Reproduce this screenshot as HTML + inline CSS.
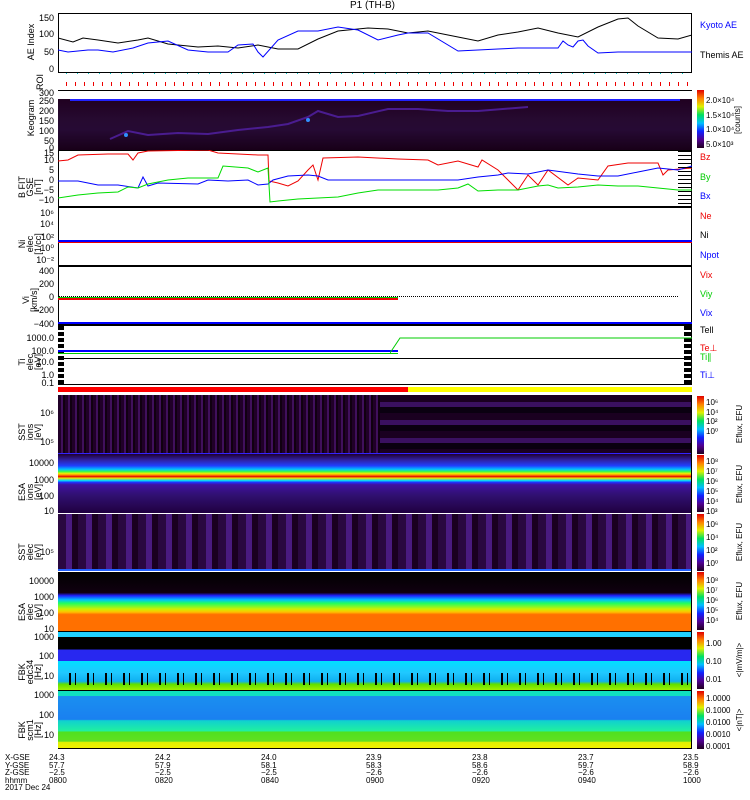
<!DOCTYPE html>
<html><head><meta charset="utf-8"><style>
body{margin:0;background:#fff;width:750px;height:800px;position:relative;overflow:hidden;font-family:"Liberation Sans",sans-serif;}
.a{position:absolute}
.p{position:absolute;left:58px;width:634px;border:1px solid #000;box-sizing:border-box}
.t{position:absolute;font-size:9px;line-height:9px;white-space:nowrap}
.yl{position:absolute;font-size:9px;transform:rotate(-90deg);transform-origin:center;white-space:nowrap;text-align:center;line-height:8px}
.cb{position:absolute;left:697px;width:7px;background:linear-gradient(to top,#200020,#500090,#1020ff,#00c0ff,#00e060,#e0f000,#ff8000,#e00000)}
.r{position:absolute;font-size:9px;left:700px;white-space:nowrap}
.tk{position:absolute;font-size:9px;text-align:right;width:54px;left:0}
.rt{position:absolute;left:678px;width:14px;background:repeating-linear-gradient(#000 0 1px,transparent 1px 4px)}
</style></head><body>
<div class="t" style="left:350px;top:1px;font-size:10px">P1 (TH-B)</div>

<!-- AE -->
<div class="p" style="top:13px;height:60px"></div>
<svg class="a" style="left:58px;top:13px" width="634" height="60">
<polyline fill="none" stroke="#000" points="0,25 15,29 25,25 40,27 60,30 80,27 90,25 110,31 140,34 160,33 180,35 200,32 220,36 240,36 260,26 280,18 310,15 330,16 350,20 370,18 400,24 420,28 440,22 460,19 480,15 500,20 520,24 540,14 560,6 570,5 580,13 600,25 620,26 634,22"/>
<polyline fill="none" stroke="#00f" points="0,37 10,39 30,37 40,37 55,39 75,35 90,30 110,28 130,37 150,39 170,39 180,32 195,31 200,39 205,44 220,27 240,18 260,18 280,14 300,17 320,27 340,22 350,20 370,20 400,38 420,37 440,36 460,35 490,35 500,35 505,28 510,32 515,34 520,28 525,27 530,33 540,40 560,39 590,39 634,39"/>
</svg>
<div class="tk" style="top:13px">150</div><div class="tk" style="top:29px">100</div><div class="tk" style="top:47px">50</div><div class="tk" style="top:64px">0</div>
<div class="yl" style="left:6px;top:38px;width:50px">AE Index</div>
<div class="r" style="top:20px;color:#00f">Kyoto AE</div><div class="r" style="top:50px">Themis AE</div>

<!-- ROI -->
<div class="a" style="left:58px;top:73px;width:634px;height:17px;border-bottom:1px solid #000;background:repeating-linear-gradient(90deg,transparent 0 8px,#0cc 8px 9px,transparent 9px 11px) 0 0/100% 1px no-repeat,repeating-linear-gradient(90deg,transparent 0 8px,#e00 8px 9px) 0 9px/100% 4px no-repeat"></div>
<div class="yl" style="left:30px;top:78px;width:20px">ROI</div>

<!-- Keogram -->
<div class="p" style="top:90px;height:60px;border:none;border-top:1px solid #000"></div>
<div class="a" style="left:58px;top:99px;width:634px;height:51px;background:linear-gradient(#200020,#260a30 40%,#260a34 60%,#180018)"></div>
<div class="a" style="left:70px;top:99px;width:610px;height:2px;background:#22f"></div>
<svg class="a" style="left:58px;top:99px" width="634" height="51"><polyline fill="none" stroke="#4a1c90" stroke-width="2" points="52,40 70,32 90,36 120,34 150,35 180,31 210,28 230,25 250,18 260,12 280,18 300,17 330,10 360,10 390,12 420,12 470,8"/><circle cx="68" cy="36" r="2" fill="#3090ff"/><circle cx="250" cy="21" r="2" fill="#3090ff"/></svg>
<div class="tk" style="top:88px">300</div><div class="tk" style="top:96px">250</div><div class="tk" style="top:106px">200</div><div class="tk" style="top:116px">150</div><div class="tk" style="top:126px">100</div><div class="tk" style="top:136px">50</div><div class="tk" style="top:143px">0</div>
<div class="yl" style="left:6px;top:114px;width:50px">Keogram</div>
<div class="cb" style="top:90px;height:58px;left:697px"></div>
<div class="r" style="left:706px;top:96px;font-size:8px">2.0×10⁴</div><div class="r" style="left:706px;top:111px;font-size:8px">1.5×10⁴</div><div class="r" style="left:706px;top:125px;font-size:8px">1.0×10⁴</div><div class="r" style="left:706px;top:140px;font-size:8px">5.0×10³</div>
<div class="yl" style="left:718px;top:116px;width:40px;font-size:8px">[counts]</div>

<!-- B FIT -->
<div class="p" style="top:150px;height:57px"></div>
<svg class="a" style="left:58px;top:150px" width="634" height="57">
<polyline fill="none" stroke="#e00" points="0,11 10,10 20,5 50,4 70,4 75,10 80,3 90,1 150,0 160,3 180,4 200,5 210,5 211,31 220,33 230,36 240,31 250,20 255,15 260,30 265,8 300,7 340,9 370,10 380,15 400,11 420,17 424,10 440,20 450,30 460,40 470,25 480,35 490,20 510,35 520,28 540,30 550,16 570,13 600,13 605,25 610,20 634,18"/>
<polyline fill="none" stroke="#00f" points="0,31 20,31 30,33 40,35 60,35 80,38 85,27 90,36 100,33 140,34 150,30 170,31 190,30 200,35 210,34 215,30 230,26 250,25 260,26 270,30 300,30 340,30 380,30 400,30 420,27 440,25 450,23 470,24 490,20 520,24 540,26 560,26 580,22 600,18 620,20 634,16"/>
<polyline fill="none" stroke="#0d0" points="0,48 20,45 40,43 60,42 70,37 80,38 90,34 110,30 130,28 160,28 165,16 190,18 200,22 210,18 212,52 220,51 240,49 260,48 280,47 300,43 320,40 340,40 380,40 400,38 410,34 420,41 440,40 460,40 480,36 490,35 500,38 520,37 540,35 560,36 580,36 620,40 634,40"/>
</svg>
<div class="rt" style="top:151px;height:55px"></div>
<div class="tk" style="top:148px">15</div><div class="tk" style="top:155px">10</div><div class="tk" style="top:165px">5</div><div class="tk" style="top:175px">0</div><div class="tk" style="top:185px">−5</div><div class="tk" style="top:195px">−10</div>
<div class="yl" style="left:10px;top:175px;width:40px">B FIT<br>GSE<br>[nT]</div>
<div class="r" style="top:152px;color:#e00">Bz</div><div class="r" style="top:172px;color:#0c0">By</div><div class="r" style="top:191px;color:#00f">Bx</div>

<!-- Ni -->
<div class="p" style="top:207px;height:59px"></div>
<div class="a" style="left:58px;top:240px;width:634px;height:2px;background:#00f"></div>
<div class="a" style="left:58px;top:242px;width:634px;height:1px;background:#e00"></div>
<div class="tk" style="top:208px">10⁶</div><div class="tk" style="top:219px">10⁴</div><div class="tk" style="top:232px">10²</div><div class="tk" style="top:243px">10⁰</div><div class="tk" style="top:255px">10⁻²</div>
<div class="yl" style="left:10px;top:232px;width:40px">Ni<br>elec<br>[1/cc]</div>
<div class="r" style="top:211px;color:#e00">Ne</div><div class="r" style="top:230px">Ni</div><div class="r" style="top:250px;color:#00f">Npot</div>

<!-- Vi -->
<div class="p" style="top:266px;height:59px"></div>
<div class="a" style="left:58px;top:296px;width:620px;border-top:1px dotted #000"></div>
<div class="a" style="left:58px;top:297px;width:340px;height:1px;background:#0c0"></div>
<div class="a" style="left:58px;top:298px;width:340px;height:2px;background:#e00"></div>
<div class="a" style="left:58px;top:322px;width:634px;height:2px;background:#00f"></div>
<div class="tk" style="top:266px">400</div><div class="tk" style="top:279px">200</div><div class="tk" style="top:292px">0</div><div class="tk" style="top:305px">−200</div><div class="tk" style="top:319px">−400</div>
<div class="yl" style="left:10px;top:292px;width:40px">Vi<br>[km/s]</div>
<div class="r" style="top:270px;color:#e00">Vix</div><div class="r" style="top:289px;color:#0c0">Viy</div><div class="r" style="top:308px;color:#00f">Vix</div>

<!-- Ti -->
<div class="p" style="top:325px;height:34px"></div>
<div class="p" style="top:358px;height:27px"></div>
<div class="a" style="left:58px;top:326px;width:6px;height:58px;background:repeating-linear-gradient(#000 0 4px,#fff 4px 6px)"></div>
<div class="a" style="left:684px;top:326px;width:7px;height:58px;background:repeating-linear-gradient(#000 0 4px,#fff 4px 6px)"></div>
<div class="a" style="left:58px;top:350px;width:340px;height:2px;background:#00f"></div>
<div class="a" style="left:58px;top:353px;width:340px;height:1px;background:#0c0"></div>
<svg class="a" style="left:390px;top:335px" width="302" height="20"><polyline fill="none" stroke="#0c0" points="0,18 10,3 302,3"/></svg>
<div class="tk" style="top:333px">1000.0</div><div class="tk" style="top:346px">100.0</div><div class="tk" style="top:357px">10.0</div><div class="tk" style="top:370px">1.0</div><div class="tk" style="top:378px">0.1</div>
<div class="yl" style="left:10px;top:350px;width:40px">Ti<br>elec<br>[eV]</div>
<div class="r" style="top:325px">Tell</div><div class="r" style="top:343px;color:#e00">Te⊥</div><div class="r" style="top:352px;color:#0c0">Ti∥</div><div class="r" style="top:370px;color:#00f">Ti⊥</div>

<!-- bar -->
<div class="a" style="left:58px;top:387px;width:350px;height:5px;background:#f00"></div>
<div class="a" style="left:408px;top:387px;width:284px;height:5px;background:#ff0"></div>

<!-- SST ion -->
<div class="a" style="left:58px;top:395px;width:634px;height:58px;background:repeating-linear-gradient(90deg,#200028 0 3px,#40105c 3px 5px,#100010 5px 7px);"></div>
<div class="a" style="left:380px;top:395px;width:312px;height:58px;background:repeating-linear-gradient(#1a0020 0 7px,#3a1060 7px 12px,#0a0010 12px 18px)"></div>
<div class="a" style="left:58px;top:453px;width:634px;height:1px;background:#32f"></div>
<div class="tk" style="top:408px">10⁶</div><div class="tk" style="top:437px">10⁵</div>
<div class="yl" style="left:10px;top:420px;width:40px">SST<br>ions<br>[eV]</div>

<!-- ESA ion -->
<div class="a" style="left:58px;top:454px;width:634px;height:59px;background:linear-gradient(#200030 0,#3020a0 10%,#2040ff 20%,#00c0ff 26%,#40ff40 30%,#f0f000 33%,#ff8000 36%,#e00000 38%,#f0e000 41%,#00e0ff 45%,#2030ff 48%,#4010a0 52%,#301070 70%,#200040 100%)"></div>
<div class="tk" style="top:458px">10000</div><div class="tk" style="top:475px">1000</div><div class="tk" style="top:491px">100</div><div class="tk" style="top:506px">10</div>
<div class="yl" style="left:10px;top:480px;width:40px">ESA<br>ions<br>[eV]</div>

<!-- SST elec -->
<div class="a" style="left:58px;top:514px;width:634px;height:57px;background:repeating-linear-gradient(90deg,#2a0840 0 8px,#4a1a80 8px 14px,#1a0020 14px 20px)"></div>
<div class="a" style="left:58px;top:569px;width:634px;height:2px;background:#2060ff"></div>
<div class="tk" style="top:547px">10⁵</div>
<div class="yl" style="left:10px;top:540px;width:40px">SST<br>elec<br>[eV]</div>

<!-- ESA elec -->
<div class="a" style="left:58px;top:572px;width:634px;height:59px;background:linear-gradient(#000 0,#100010 35%,#2020ff 40%,#00c0ff 47%,#20ff60 53%,#d0f000 63%,#ffc000 68%,#ff7000 72%,#ff7000 100%)"></div>
<div class="tk" style="top:576px">10000</div><div class="tk" style="top:592px">1000</div><div class="tk" style="top:608px">100</div><div class="tk" style="top:624px">10</div>
<div class="yl" style="left:10px;top:600px;width:40px">ESA<br>elec<br>[eV]</div>

<!-- FBK edc34 -->
<div class="a" style="left:58px;top:631px;width:634px;height:59px;border-top:1px solid #000;box-sizing:border-box;background:linear-gradient(#20d0ff 0,#20d0ff 9%,#000 9%,#000 30%,#2828f0 30%,#2828f0 50%,#00e0ff 50%,#20c8ff 70%,#10b0f0 85%,#60e000 90%,#a0f000 100%)"></div>
<div class="a" style="left:58px;top:673px;width:634px;height:12px;background:repeating-linear-gradient(90deg,transparent 0 11px,#000 11px 13px,transparent 13px 17px,#000 17px 18px)"></div>
<div class="tk" style="top:632px">1000</div><div class="tk" style="top:651px">100</div><div class="tk" style="top:671px">10</div>
<div class="yl" style="left:10px;top:660px;width:40px">FBK<br>edc34<br>[Hz]</div>

<!-- FBK scm1 -->
<div class="a" style="left:58px;top:690px;width:634px;height:59px;border-top:1px solid #000;border-bottom:1px solid #000;box-sizing:border-box;background:linear-gradient(#10e0c0 0,#10e0c0 9%,#1a8ff0 9%,#1a80f0 50%,#10d0d0 52%,#20f0a0 70%,#50e020 72%,#60e020 88%,#e0f000 90%,#f0f000 100%)"></div>
<div class="tk" style="top:690px">1000</div><div class="tk" style="top:710px">100</div><div class="tk" style="top:730px">10</div>
<div class="yl" style="left:10px;top:718px;width:40px">FBK<br>scm1<br>[Hz]</div>

<!-- right border/colorbars -->
<div class="a" style="left:691px;top:395px;width:1px;height:354px;background:#000"></div>
<div class="cb" style="top:396px;height:58px"></div>
<div class="cb" style="top:455px;height:57px"></div>
<div class="cb" style="top:514px;height:57px"></div>
<div class="cb" style="top:572px;height:58px"></div>
<div class="cb" style="top:632px;height:57px"></div>
<div class="cb" style="top:691px;height:58px"></div>
<div class="r" style="left:706px;top:398px;font-size:8px;line-height:9.5px">10⁶<br>10⁴<br>10²<br>10⁰</div>
<div class="r" style="left:706px;top:457px;font-size:8px;line-height:10px">10⁸<br>10⁷<br>10⁶<br>10⁵<br>10⁴<br>10³</div>
<div class="r" style="left:706px;top:518px;font-size:8px;line-height:13px">10⁶<br>10⁴<br>10²<br>10⁰</div>
<div class="r" style="left:706px;top:576px;font-size:8px;line-height:10px">10⁸<br>10⁷<br>10⁶<br>10⁵<br>10⁴</div>
<div class="r" style="left:706px;top:635px;font-size:8px;line-height:18px">1.00<br>0.10<br>0.01</div>
<div class="r" style="left:706px;top:693px;font-size:8px;line-height:12px">1.0000<br>0.1000<br>0.0100<br>0.0010<br>0.0001</div>
<div class="yl" style="left:715px;top:420px;width:50px;font-size:8px">Eflux, EFU</div>
<div class="yl" style="left:715px;top:480px;width:50px;font-size:8px">Eflux, EFU</div>
<div class="yl" style="left:715px;top:538px;width:50px;font-size:8px">Eflux, EFU</div>
<div class="yl" style="left:715px;top:597px;width:50px;font-size:8px">Eflux, EFU</div>
<div class="yl" style="left:715px;top:656px;width:50px;font-size:8px">&lt;|mV/m|&gt;</div>
<div class="yl" style="left:715px;top:716px;width:50px;font-size:8px">&lt;|nT|&gt;</div>

<!-- bottom axis -->
<div class="t" style="left:5px;top:754px;font-size:8px;line-height:7.5px">X-GSE<br>Y-GSE<br>Z-GSE<br>hhmm<br>2017 Dec 24</div>
<div class="t" style="left:49px;top:754px;font-size:8px;line-height:7.5px">24.3<br>57.7<br>−2.5<br>0800</div>
<div class="t" style="left:155px;top:754px;font-size:8px;line-height:7.5px">24.2<br>57.9<br>−2.5<br>0820</div>
<div class="t" style="left:261px;top:754px;font-size:8px;line-height:7.5px">24.0<br>58.1<br>−2.5<br>0840</div>
<div class="t" style="left:366px;top:754px;font-size:8px;line-height:7.5px">23.9<br>58.3<br>−2.6<br>0900</div>
<div class="t" style="left:472px;top:754px;font-size:8px;line-height:7.5px">23.8<br>58.6<br>−2.6<br>0920</div>
<div class="t" style="left:578px;top:754px;font-size:8px;line-height:7.5px">23.7<br>59.7<br>−2.6<br>0940</div>
<div class="t" style="left:683px;top:754px;font-size:8px;line-height:7.5px">23.5<br>58.9<br>−2.6<br>1000</div>
</body></html>
